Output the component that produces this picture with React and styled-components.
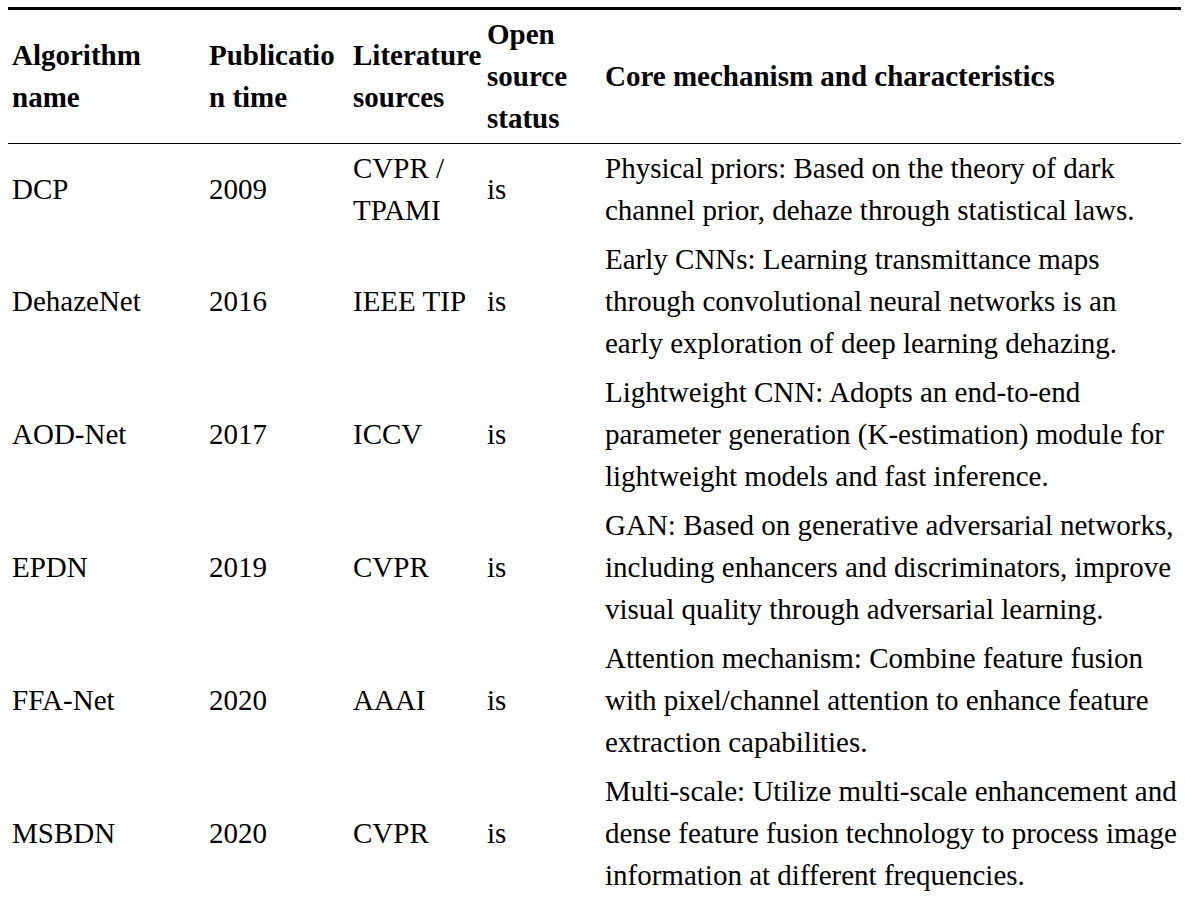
import React from 'react';
import styled, { createGlobalStyle } from 'styled-components';

const GlobalStyle = createGlobalStyle`
	html, body {
		margin: 0;
		padding: 0;
		background: #fff;
	}
`;

const headers = [
	['Algorithm', 'name'],
	['Publicatio', 'n time'],
	['Literature', 'sources'],
	['Open', 'source', 'status'],
	['Core mechanism and characteristics']
];

const rows = [
	{
		name: 'DCP',
		year: '2009',
		source: ['CVPR /', 'TPAMI'],
		open: 'is',
		desc: [
			'Physical priors: Based on the theory of dark',
			'channel prior, dehaze through statistical laws.'
		]
	},
	{
		name: 'DehazeNet',
		year: '2016',
		source: ['IEEE TIP'],
		open: 'is',
		desc: [
			'Early CNNs: Learning transmittance maps',
			'through convolutional neural networks is an',
			'early exploration of deep learning dehazing.'
		]
	},
	{
		name: 'AOD-Net',
		year: '2017',
		source: ['ICCV'],
		open: 'is',
		desc: [
			'Lightweight CNN: Adopts an end-to-end',
			'parameter generation (K-estimation) module for',
			'lightweight models and fast inference.'
		]
	},
	{
		name: 'EPDN',
		year: '2019',
		source: ['CVPR'],
		open: 'is',
		desc: [
			'GAN: Based on generative adversarial networks,',
			'including enhancers and discriminators, improve',
			'visual quality through adversarial learning.'
		]
	},
	{
		name: 'FFA-Net',
		year: '2020',
		source: ['AAAI'],
		open: 'is',
		desc: [
			'Attention mechanism: Combine feature fusion',
			'with pixel/channel attention to enhance feature',
			'extraction capabilities.'
		]
	},
	{
		name: 'MSBDN',
		year: '2020',
		source: ['CVPR'],
		open: 'is',
		desc: [
			'Multi-scale: Utilize multi-scale enhancement and',
			'dense feature fusion technology to process image',
			'information at different frequencies.'
		]
	}
];

const colWidths = [197, 144, 134, 118, 580];

const Lines = ({ items }) => items.map((line, i) => (
	<React.Fragment key={i}>
		{i > 0 && <br />}
		{line}
	</React.Fragment>
));

export default function App() {
	return (
		<Page>
			<GlobalStyle />
			<Table>
				<colgroup>
					{colWidths.map((w, i) => <col key={i} style={{ width: w }} />)}
				</colgroup>
				<thead>
					<tr>
						{headers.map((h, i) => (
							<HeadCell key={i}><Lines items={h} /></HeadCell>
						))}
					</tr>
				</thead>
				<tbody>
					{rows.map(row => (
						<tr key={row.name}>
							<Cell>{row.name}</Cell>
							<Cell>{row.year}</Cell>
							<Cell><Lines items={row.source} /></Cell>
							<Cell>{row.open}</Cell>
							<Cell><Lines items={row.desc} /></Cell>
						</tr>
					))}
				</tbody>
			</Table>
		</Page>
	);
}

const Page = styled.div`
	padding: 7px 4px 0 8px;
	font-family: "Liberation Serif", "Times New Roman", serif;
	color: #000;
`;

const Table = styled.table`
	width: 1173px;
	table-layout: fixed;
	border-collapse: collapse;
	border-top: 3.5px solid #000;
	font-size: 29px;
	line-height: 42px;
`;

const HeadCell = styled.th`
	padding: 3px 4px 4px;
	text-align: left;
	vertical-align: middle;
	font-weight: bold;
	white-space: nowrap;
	border-bottom: 1.5px solid #000;
`;

const Cell = styled.td`
	padding: 3px 4px 4px;
	text-align: left;
	vertical-align: middle;
	font-weight: normal;
	white-space: nowrap;
`;
